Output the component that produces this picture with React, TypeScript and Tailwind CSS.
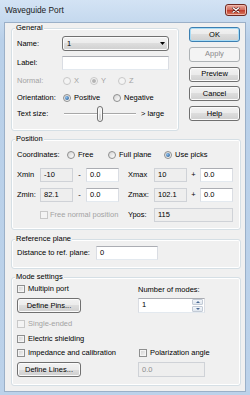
import React from 'react'

const inputBase = 'flex items-center border border-[#abadb3] border-x-[#dadde3] border-b-[#e3e9ef] pl-[3px]'
const greyInput = 'flex items-center border border-[#cfd2d7] bg-[#eeeeee] pl-[3px]'
const btnSkin =
  'rounded-[3px] border bg-[linear-gradient(to_bottom,#f2f2f2_0%,#ebebeb_50%,#dddddd_50%,#cfcfcf_100%)] shadow-[inset_0_0_0_1px_#fbfbfb]'
const btnBase = `flex items-center justify-center ${btnSkin}`

function Radio({ checked, disabled }: { checked?: boolean; disabled?: boolean }) {
  return (
    <span
      className={`flex h-[8px] w-[8px] shrink-0 items-center justify-center rounded-full border ${
        disabled ? 'border-[#c8c8c8] bg-[#f4f4f4]' : 'border-[#8e8f8f] bg-[linear-gradient(135deg,#d4d4d4,#ffffff)]'
      }`}
    >
      {checked && (
        <span
          className={`h-[4px] w-[4px] rounded-full ${
            disabled ? 'bg-[#b4b4b4]' : 'bg-[radial-gradient(circle_at_35%_35%,#8cc0f0,#1b4f86)]'
          }`}
        />
      )}
    </span>
  )
}

function Check({ disabled }: { disabled?: boolean }) {
  return (
    <span
      className={`block h-[8px] w-[8px] shrink-0 border ${
        disabled
          ? 'border-[#c8c8c8] bg-[#f4f4f4]'
          : 'border-[#8e8f8f] bg-[linear-gradient(135deg,#cfcfcf,#f7f7f7)] shadow-[inset_0_0_0_1px_#f4f4f4]'
      }`}
    />
  )
}

function Opt({ w, label, checked, disabled }: { w: string; label: string; checked?: boolean; disabled?: boolean }) {
  return (
    <div className={`flex items-center gap-[3px] ${w}`}>
      <Radio checked={checked} disabled={disabled} />
      <span className={disabled ? 'text-[#a3a3a3]' : ''}>{label}</span>
    </div>
  )
}

function Button({ label, variant }: { label: string; variant?: 'default' | 'disabled' }) {
  if (variant === 'disabled')
    return (
      <div className="flex h-[15px] w-[51px] items-center justify-center rounded-[3px] border border-[#adb2b5] bg-[#f4f4f4] text-[#8a8a8a]">
        {label}
      </div>
    )
  if (variant === 'default')
    return (
      <div className="flex h-[15px] w-[51px] items-center justify-center rounded-[3px] border border-[#3c7fb1] bg-[linear-gradient(to_bottom,#f2f2f2_0%,#ebebeb_50%,#dddddd_50%,#cfcfcf_100%)] shadow-[inset_0_0_0_1px_#a8dcf6]">
        {label}
      </div>
    )
  return <div className={`${btnBase} h-[15px] w-[51px] border-[#707070]`}>{label}</div>
}

function Group({ title, className, children }: { title: string; className: string; children?: React.ReactNode }) {
  return (
    <div className={`flex flex-col rounded-[3px] border border-[#d5dfe5] px-[5px] shadow-[inset_0_0_0_1px_#ffffff] ${className}`}>
      <span className="-mt-[6px] -ml-[2px] w-fit bg-[#f0f0f0] px-[1px] leading-[10px]">{title}</span>
      {children}
    </div>
  )
}

export default function App() {
  return (
    <div className="flex h-[395px] w-[250px] flex-col bg-[linear-gradient(to_bottom,#d3e3f4,#b9d0e9_40px,#bcd2ea)] font-['Liberation_Sans',Arial,sans-serif] text-[7.5px] leading-[10px] text-black">
      {/* title bar */}
      <div className="flex h-[22px] shrink-0 items-center pb-[2px] pl-[5px] pr-[3px]">
        <span className="text-[8.3px] text-[#1a1a1a]">Waveguide Port</span>
        <div className="ml-auto flex h-[12px] w-[22px] items-center justify-center rounded-[3px] border border-[#6f2a22] bg-[linear-gradient(to_bottom,#e9a99c,#d0695a_50%,#c0392b_50%,#d77a5e)] shadow-[inset_0_0_0_1px_#f0b6aa]">
          <svg width="8" height="6" viewBox="0 0 8 6">
            <path d="M1 0.8 L7 5.2 M7 0.8 L1 5.2" stroke="#5a1a14" strokeWidth="2.4" strokeLinecap="round" />
            <path d="M1 0.8 L7 5.2 M7 0.8 L1 5.2" stroke="#ffffff" strokeWidth="1.4" strokeLinecap="round" />
          </svg>
        </div>
      </div>

      {/* client area */}
      <div className="mx-[4px] mb-[3px] flex flex-1 flex-col border border-[#9bb0c8] bg-[#f0f0f0] pl-[6px] pt-[5px]">
        <div className="flex items-start">
          <Group title="General" className="h-[103px] w-[168px]">
            <div className="mt-[3px] flex h-[15px] items-center">
              <span className="w-[45px]">Name:</span>
              <div className={`flex h-[15px] w-[107px] items-center justify-between border-[#707070] pl-[4px] pr-[3px] ${btnSkin}`}>
                <span>1</span>
                <svg width="5" height="3" viewBox="0 0 5 3">
                  <path d="M0 0 H5 L2.5 3 Z" fill="#000" />
                </svg>
              </div>
            </div>
            <div className="mt-[5px] flex h-[14px] items-center">
              <span className="w-[45px]">Label:</span>
              <div className={`${inputBase} h-[14px] w-[107px] bg-white`} />
            </div>
            <div className="mt-[4px] flex h-[14px] items-center">
              <span className="w-[46px] text-[#a3a3a3]">Normal:</span>
              <Opt w="w-[27px]" label="X" disabled />
              <Opt w="w-[28px]" label="Y" checked disabled />
              <Opt w="w-[20px]" label="Z" disabled />
            </div>
            <div className="mt-[3px] flex h-[14px] items-center">
              <span className="w-[46px]">Orientation:</span>
              <Opt w="w-[50px]" label="Positive" checked />
              <Opt w="w-[50px]" label="Negative" />
            </div>
            <div className="mt-[1px] flex h-[16px] items-center">
              <span className="w-[47px]">Text size:</span>
              <div className="flex items-center">
                <div className="h-[2px] w-[33px] border-t border-[#a8a8a8] bg-white" />
                <div className={`${btnBase} h-[16px] w-[6px] rounded-[2px] border-[#707070]`} />
                <div className="h-[2px] w-[33px] border-t border-[#a8a8a8] bg-white" />
              </div>
              <span className="ml-[5px]">&gt; large</span>
            </div>
          </Group>

          <div className="-mt-[1px] ml-[10px] flex flex-col gap-[4.75px]">
            <Button label="OK" variant="default" />
            <Button label="Apply" variant="disabled" />
            <Button label="Preview" />
            <Button label="Cancel" />
            <Button label="Help" />
          </div>
        </div>

        <Group title="Position" className="mt-[8px] h-[91px] w-[230px]">
          <div className="mt-[4px] flex h-[14px] items-center">
            <span className="w-[50px]">Coordinates:</span>
            <Opt w="w-[41px]" label="Free" />
            <Opt w="w-[56px]" label="Full plane" />
            <Opt w="w-[50px]" label="Use picks" checked />
          </div>
          {[
            ['Xmin', '-10', '-', 'Xmax', '10'],
            ['Zmin:', '82.1', '-', 'Zmax:', '102.1'],
          ].map(([a, v1, op, b, v3], i) => (
            <div key={i} className="mt-[6px] flex h-[14px] items-center">
              <span className="w-[23px]">{a}</span>
              <div className={`${greyInput} h-[14px] w-[33px]`}>{v1}</div>
              <span className="w-[13px] text-center">{op}</span>
              <div className={`${inputBase} h-[14px] w-[33px] bg-white`}>0.0</div>
              <span className="ml-[9px] w-[26px]">{b}</span>
              <div className={`${greyInput} h-[14px] w-[33px]`}>{v3}</div>
              <span className="w-[13px] text-center">+</span>
              <div className={`${inputBase} h-[14px] w-[33px] bg-white`}>0.0</div>
            </div>
          ))}
          <div className="mt-[6px] flex h-[14px] items-center">
            <div className="flex w-[111px] items-center gap-[2px] pl-[23px]">
              <Check disabled />
              <span className="text-[#a3a3a3]">Free normal position</span>
            </div>
            <span className="w-[26px]">Ypos:</span>
            <div className={`${greyInput} h-[14px] w-[79px]`}>115</div>
          </div>
        </Group>

        <Group title="Reference plane" className="mt-[9px] h-[30px] w-[230px]">
          <div className="mt-[2px] flex h-[14px] items-center">
            <span className="w-[79px]">Distance to ref. plane:</span>
            <div className={`${inputBase} h-[14px] w-[62px] bg-white`}>0</div>
          </div>
        </Group>

        <Group title="Mode settings" className="mt-[8px] h-[109px] w-[230px]">
          <div className="mt-[1px] flex h-[12px] items-center">
            <div className="flex w-[121px] items-center gap-[3px]">
              <Check />
              <span>Multipin port</span>
            </div>
            <span className="mt-[2px]">Number of modes:</span>
          </div>
          <div className="mt-[3px] flex h-[15px] items-center">
            <div className="w-[121px]">
              <div className={`${btnBase} h-[15px] w-[64px] border-[#707070]`}>Define Pins...</div>
            </div>
            <div className={`${inputBase} -mt-[1px] h-[15px] w-[67px] justify-between bg-white pr-[1px]`}>
              <span>1</span>
              <div className="flex h-[13px] w-[11px] flex-col gap-[1px]">
                {[0, 1].map((k) => (
                  <div
                    key={k}
                    className="flex flex-1 items-center justify-center rounded-[1px] border border-[#c3cbd6] bg-[linear-gradient(to_bottom,#f3f6fa,#dfe6ee)]"
                  >
                    <svg width="4" height="2" viewBox="0 0 4 2">
                      <path d={k === 0 ? 'M0 2 L2 0 L4 2 Z' : 'M0 0 L4 0 L2 2 Z'} fill="#4a6a95" />
                    </svg>
                  </div>
                ))}
              </div>
            </div>
          </div>
          <div className="mt-[4px] flex h-[14px] items-center gap-[3px]">
            <Check disabled />
            <span className="text-[#a3a3a3]">Single-ended</span>
          </div>
          <div className="mt-[1px] flex h-[14px] items-center gap-[3px]">
            <Check />
            <span>Electric shielding</span>
          </div>
          <div className="flex h-[14px] items-center">
            <div className="flex w-[122px] items-center gap-[3px]">
              <Check />
              <span>Impedance and calibration</span>
            </div>
            <Check />
            <span className="ml-[3px]">Polarization angle</span>
          </div>
          <div className="mt-[2px] flex h-[15px] items-center">
            <div className="w-[121px]">
              <div className={`${btnBase} h-[15px] w-[64px] border-[#707070]`}>Define Lines...</div>
            </div>
            <div className={`${greyInput} h-[15px] w-[67px] text-[#8d8d8d]`}>0.0</div>
          </div>
        </Group>
      </div>
    </div>
  )
}
